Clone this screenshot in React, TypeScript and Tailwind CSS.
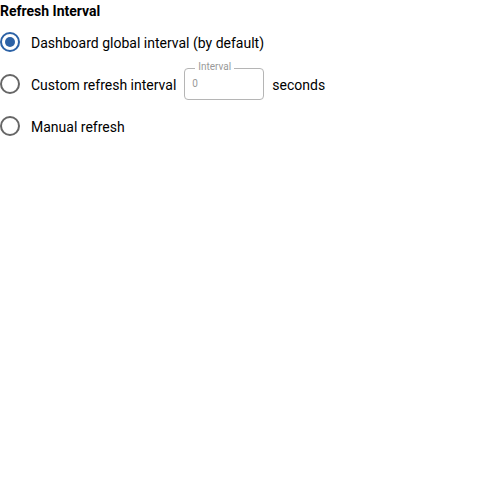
const options = [
  { id: "global", label: "Dashboard global interval (by default)", checked: true },
  { id: "custom", label: "Custom refresh interval", checked: false },
  { id: "manual", label: "Manual refresh", checked: false },
];

const RadioIcon = ({ checked }: { checked: boolean }) => (
  <svg width="20" height="20" viewBox="0 0 20 20" className="shrink-0">
    <circle cx="10" cy="10" r="9" fill="none" stroke={checked ? "#2c62a6" : "#666666"} strokeWidth="2" />
    {checked && <circle cx="10" cy="10" r="5" fill="#2c62a6" />}
  </svg>
);

export default function App() {
  return (
    <div className="h-[500px] w-[500px] bg-white font-['Roboto',sans-serif] text-[14px] text-black">
      <h3 className="pt-[3px] text-[14px] leading-[16px] font-bold">Refresh Interval</h3>
      <div className="mt-[13px] flex flex-col gap-[22px]">
        {options.map((opt) => (
          <div key={opt.id} className="flex h-[20px] items-center">
            <RadioIcon checked={opt.checked} />
            <span className="ml-[11px] pt-[2px] leading-[20px]">{opt.label}</span>
            {opt.id === "custom" && (
              <div className="ml-[8px] flex items-center">
                <div className="relative flex h-[32px] w-[80px] items-center rounded-[4px] border border-[#b5b5b5] px-[7px]">
                  <span className="absolute -top-[8px] left-[10px] bg-white px-[3px] text-[10px] leading-[12px] text-[#999999]">
                    Interval
                  </span>
                  <span className="text-[10px] leading-[12px] text-[#999999]">0</span>
                </div>
                <span className="ml-[8px] pt-[2px]">seconds</span>
              </div>
            )}
          </div>
        ))}
      </div>
    </div>
  );
}
